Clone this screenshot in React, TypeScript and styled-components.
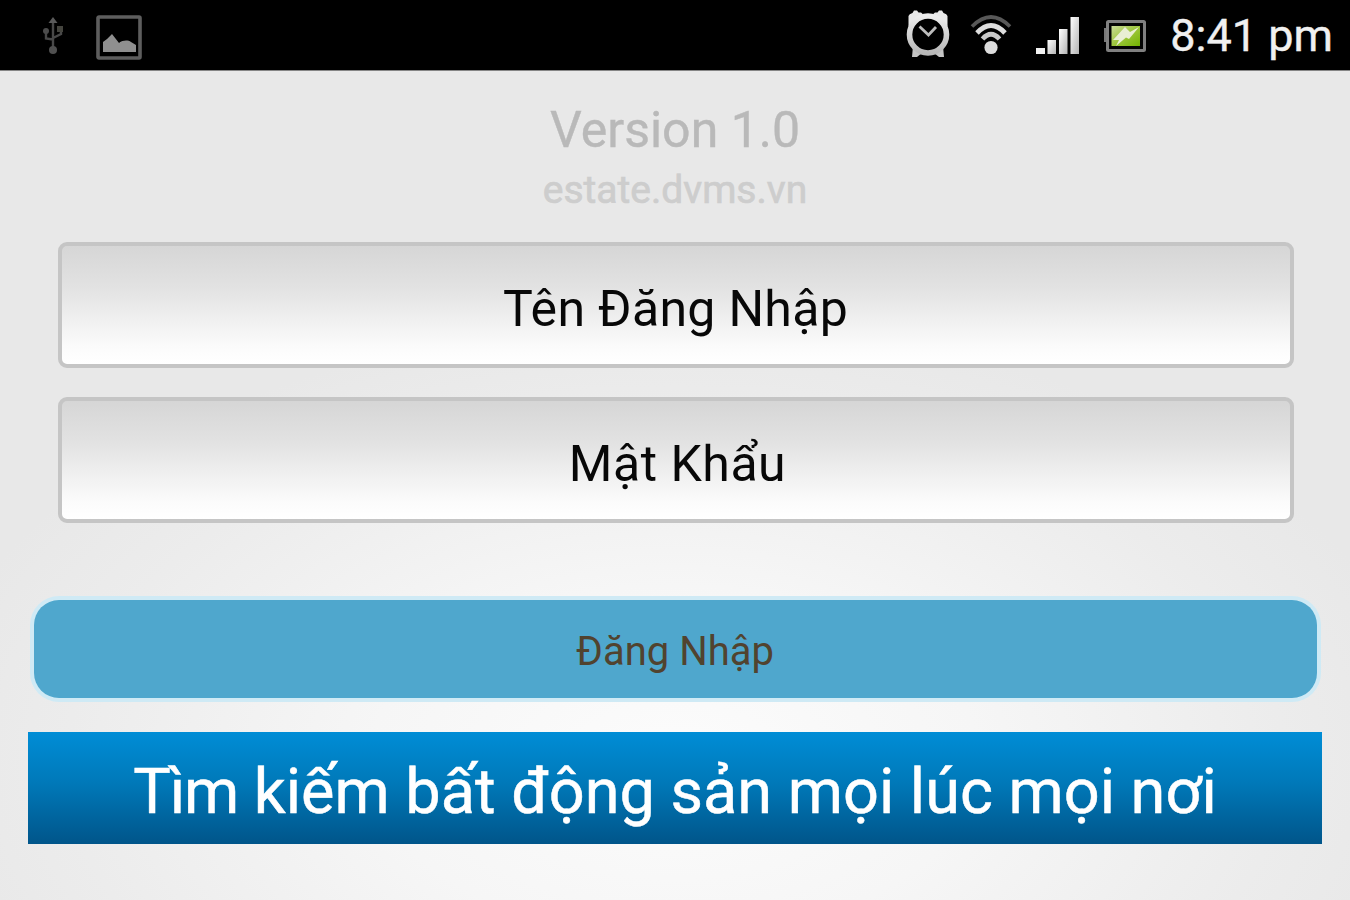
import React from "react";
import styled, { createGlobalStyle } from "styled-components";

const UsbIcon: React.FC = (): JSX.Element => (
  <svg width="24" height="40" viewBox="0 0 24 40" fill="none">
    <path
      d="M12 6V33M5 14V21.5L12 22.5M20 12V17L12 21"
      stroke="#484848"
      strokeWidth="2.4"
    />
    <path d="M12 0L16.5 6H7.5Z" fill="#5a5a5a" />
    <circle cx="5" cy="14" r="3" fill="#4c4c4c" />
    <rect x="16" y="9" width="6" height="6" fill="#45453f" />
    <circle cx="12" cy="33" r="4" fill="#505050" />
  </svg>
);

const PictureIcon: React.FC = (): JSX.Element => (
  <svg width="48" height="48" viewBox="0 0 48 48">
    <rect
      x="3"
      y="4"
      width="42"
      height="41"
      rx="1"
      fill="none"
      stroke="#5e5e5e"
      strokeWidth="3.6"
    />
    <path
      d="M8 39V29L12 26L17 21L24 30C28 27 33 27 36 29L41 32V39Z"
      fill="#8f8f8f"
    />
  </svg>
);

const AlarmIcon: React.FC = (): JSX.Element => (
  <svg width="46" height="52" viewBox="0 0 46 52" fill="none">
    <defs>
      <linearGradient id="ring" x1="0" y1="0" x2="0" y2="1">
        <stop stopColor="#ededed" />
        <stop offset="1" stopColor="#b8b8b8" />
      </linearGradient>
    </defs>
    <path
      d="M3.500 16V6Q4 4 7.500 3L9 0.500H12L13.500 2.500H16Q18 3 18 6V8ZM42.500 16V6Q42 4 38.500 3L37 0.500H34L32.500 2.500H30Q28 3 28 6V8Z"
      fill="#e8e8e8"
    />
    <path d="M8 36L7 47H12L17 43ZM38 36L39 47H34L29 43Z" fill="#c4c4c4" />
    <circle cx="23" cy="24.500" r="18.500" stroke="url(#ring)" strokeWidth="5.600" />
    <path d="M14.500 16.500L23.500 25L31 17" stroke="#bdbdbd" strokeWidth="2.8" />
  </svg>
);

const WifiIcon: React.FC = (): JSX.Element => (
  <svg width="44" height="42" viewBox="0 0 44 42" fill="none">
    <path d="M2 11.500Q21 -7.500 40 11.500" stroke="#585858" strokeWidth="3.600" />
    <path d="M7 18Q21 3 35 18" stroke="#dedede" strokeWidth="4.800" />
    <path d="M12.500 24Q21 14.500 29.500 24" stroke="#c9c9c9" strokeWidth="4.800" />
    <circle cx="21" cy="32.500" r="6.600" fill="#dcdcdc" />
  </svg>
);

const SignalIcon: React.FC = (): JSX.Element => (
  <svg width="46" height="38" viewBox="0 0 46 38">
    <defs>
      <linearGradient id="bar" x1="0" y1="0" x2="1" y2="1">
        <stop stopColor="#ffffff" />
        <stop offset="1" stopColor="#b4b4b4" />
      </linearGradient>
    </defs>
    <g fill="url(#bar)">
      <rect x="0" y="31" width="9" height="6" fill="#f2f2f2" />
      <rect x="11.500" y="23" width="8.500" height="14" />
      <rect x="23" y="12" width="8.500" height="25" />
      <rect x="34.500" y="0" width="8.500" height="37" />
    </g>
  </svg>
);

const BatteryIcon: React.FC = (): JSX.Element => (
  <svg width="44" height="32" viewBox="0 0 44 32">
    <defs>
      <linearGradient id="charge" x1="0" y1="0" x2="1" y2="1">
        <stop stopColor="#cbdc9a" />
        <stop offset="0.5" stopColor="#9dc63c" />
        <stop offset="1" stopColor="#72b300" />
      </linearGradient>
    </defs>
    <path d="M3 8H0V22H3Z" fill="#777777" />
    <rect
      x="3.500"
      y="1.500"
      width="37"
      height="29"
      rx="1"
      fill="#050505"
      stroke="#808080"
      strokeWidth="3"
    />
    <rect x="7.500" y="6" width="28.500" height="20" fill="url(#charge)" />
    <path d="M21 7L9 20H15L12 26L22 17.500L25 19L35 7L26 12Z" fill="#e9efd4" />
  </svg>
);

const App: React.FC = (): JSX.Element => {
  return (
    <Screen>
      <GlobalStyle />
      <StatusBar>
        <Notifications>
          <UsbIcon />
          <PictureIcon />
        </Notifications>
        <SystemIcons>
          <AlarmIcon />
          <WifiIcon />
          <SignalIcon />
          <BatteryIcon />
          <Clock>8:41 pm</Clock>
        </SystemIcons>
      </StatusBar>
      <Content>
        <Version>Version 1.0</Version>
        <Site>estate.dvms.vn</Site>
        <Form onSubmit={(e) => e.preventDefault()}>
          <Input
            type="text"
            name="username"
            placeholder="Tên Đăng Nhập"
            $spacing="0.3px"
          />
          <Input
            type="password"
            name="password"
            placeholder="Mật Khẩu"
            $spacing="0.5px"
            $indent="4px"
          />
          <LoginButton type="submit">Đăng Nhập</LoginButton>
        </Form>
        <Banner>
          <Lead>Tìm</Lead> kiếm bất động sản mọi lúc mọi nơi
        </Banner>
      </Content>
    </Screen>
  );
};

export default App;

const GlobalStyle = createGlobalStyle`
  * {
    box-sizing: border-box;
  }

  body {
    margin: 0;
    font-family: Roboto, "Liberation Sans", sans-serif;
  }
`;

const Screen = styled.div`
  display: flex;
  flex-direction: column;
  width: 1350px;
  height: 900px;
  overflow: hidden;
`;

const StatusBar = styled.header`
  display: flex;
  justify-content: space-between;
  height: 71px;
  flex-shrink: 0;
  padding: 0 17px 0 41px;
  background-color: #000000;
  border-bottom: 1px solid #858585;
`;

const Notifications = styled.div`
  display: flex;
  align-items: center;
  column-gap: 30px;
  padding-top: 3px;
`;

const SystemIcons = styled.div`
  display: flex;
  align-items: center;
  column-gap: 22px;
  padding-top: 2px;

  svg:first-child {
    margin-right: -3px;
  }
`;

const Clock = styled.span`
  color: #f0f0f0;
  font-size: 45px;
  line-height: 68px;
  white-space: nowrap;
  -webkit-text-stroke: 0.4px #f0f0f0;
`;

const Content = styled.main`
  display: flex;
  flex-direction: column;
  align-items: center;
  flex: 1;
  padding: 29px 28px 0;
  background: radial-gradient(
    ellipse 760px 440px at 50% 690px,
    #fcfcfc 0%,
    #f6f6f6 40%,
    #ececec 80%,
    #e8e8e8 100%
  );
`;

const Version = styled.h1`
  margin: 0;
  color: #b9b9b9;
  font-size: 50px;
  font-weight: 400;
  line-height: 60px;
  -webkit-text-stroke: 0.4px #b9b9b9;
`;

const Site = styled.p`
  margin: 0;
  color: #cdcdcd;
  font-size: 39px;
  line-height: 60px;
  -webkit-text-stroke: 0.7px #cdcdcd;
`;

const Form = styled.form`
  display: flex;
  flex-direction: column;
  align-items: center;
  width: 100%;
  padding-top: 22px;
`;

const Input = styled.input<{ $spacing: string; $indent?: string }>`
  width: 1236px;
  height: 126px;
  margin: 0 0 29px 1px;
  padding: 8px 0 0 ${(props) => props.$indent || "0"};
  border: 4px solid #c5c5c5;
  border-radius: 9px;
  outline: none;
  background: linear-gradient(#d6d6d6, #e2e2e2 35%, #fbfbfb 85%, #ffffff);
  font-family: inherit;
  font-size: 50px;
  letter-spacing: ${(props) => props.$spacing};
  text-align: center;

  &::placeholder {
    color: #080808;
    opacity: 1;
  }
`;

const LoginButton = styled.button`
  width: 1283px;
  height: 98px;
  margin-top: 48px;
  padding: 4px 0 0;
  border: none;
  border-radius: 25px;
  box-shadow: 0 0 0 4px #cfeaf5;
  background-color: #4fa7cd;
  color: #51432f;
  font-family: inherit;
  font-size: 40px;
  cursor: pointer;
`;

const Banner = styled.div`
  width: 1294px;
  height: 112px;
  margin-top: 34px;
  background: linear-gradient(#008dd6, #0079b9 45%, #00558a);
  color: #ffffff;
  font-size: 63px;
  line-height: 120px;
  text-align: center;
  white-space: nowrap;
  -webkit-text-stroke: 0.5px #ffffff;
`;

const Lead = styled.span`
  letter-spacing: -1.2px;
`;
